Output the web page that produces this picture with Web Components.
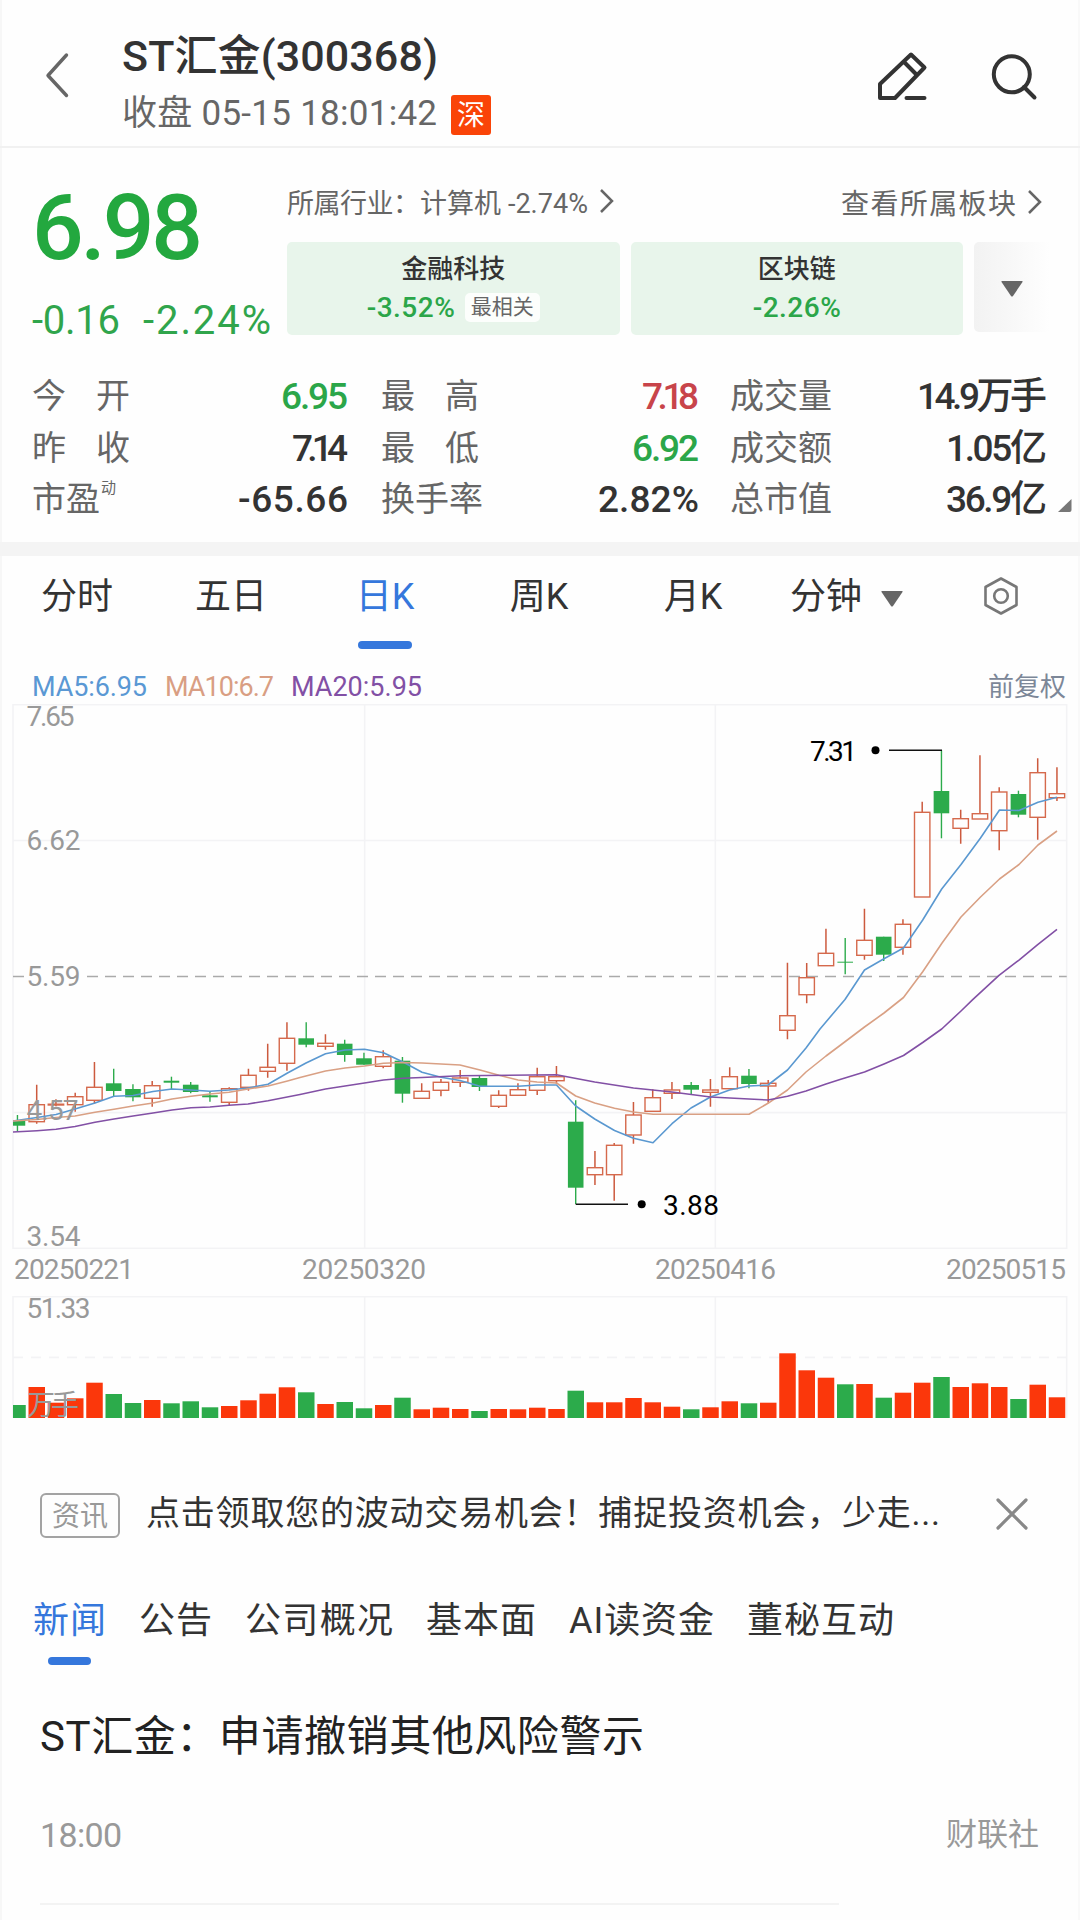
<!DOCTYPE html>
<html lang="zh-CN">
<head>
<meta charset="utf-8">
<title>ST汇金(300368)</title>
<style>
	body {
		margin: 0;
		width: 1080px;
		height: 1920px;
		overflow: hidden;
		box-sizing: border-box;
		background: #fefefe;
		font-family: Roboto, "Noto Sans CJK SC", sans-serif;
		color: #333;
		box-shadow: inset 2px 0 #f7f7f7, inset -2px 0 #f9f9f9;
	}
</style>
</head>
<body>
<stock-app></stock-app>
<script>
const GREEN = '#2cab4b';
const RED = '#fb370b';

class BaseElement extends HTMLElement {
	constructor() {
		super();
		this.attachShadow({ mode: 'open' });
	}

	connectedCallback() { this.render(); }
}

// A run of text tracked to the advance width given in "w"
class FitText extends BaseElement {
	render() {
		this.shadowRoot.innerHTML = `
			<style>
				:host { display: inline-block; white-space: nowrap; flex: none; }
			</style>
			<slot></slot>
		`;
		const target = parseFloat(this.getAttribute('w'));
		const natural = this.getBoundingClientRect().width;
		const spacing = (target - natural) / ([...this.textContent].length - 1);
		this.style.letterSpacing = `${spacing}px`;
		// the last letter's spacing does not count
		this.style.marginRight = `${-spacing}px`;
	}
}

class StockHeader extends BaseElement {
	render() {
		this.shadowRoot.innerHTML = `
			<style>
				:host {
					display: flex;
					height: 146px;
					border-bottom: 2px solid #f1f1f1;
				}
				.back { margin: 52px 0 0 45px; flex: none; }
				.titles { margin: 26px 0 0 51px; }
				.name {
					font-size: 43px;
					font-weight: 500;
					line-height: 60px;
				}
				.sub {
					display: flex;
					align-items: center;
					height: 55px;
					font-size: 35px;
					line-height: 55px;
					color: #666;
				}
				.badge {
					width: 40px;
					height: 40px;
					margin: 2px 0 0 14px;
					border-radius: 3px;
					background: #fa4408;
					color: #fff;
					font-size: 28px;
					line-height: 41px;
					text-align: center;
				}
				.edit { margin: 48px 0 0 auto; }
				.search { margin: 48px 39px 0 62px; }
			</style>
			<svg class="back" width="26" height="48" fill="none" stroke="#666" stroke-width="3.4" stroke-linecap="round" stroke-linejoin="round">
				<path d="M21.5 3 3 23.5 21.5 43.5"/>
			</svg>
			<div class="titles">
				<div class="name"><fit-text w="316">ST汇金(300368)</fit-text></div>
				<div class="sub"><fit-text w="315">收盘 05-15 18:01:42</fit-text><span class="badge">深</span></div>
			</div>
			<svg class="edit" width="54" height="56" fill="none" stroke="#333" stroke-width="4" stroke-linecap="round" stroke-linejoin="round">
				<path d="M36 6.5 49.5 19.5 20 50H5V36L36 6.5ZM28.6 13.5 41.4 26.5M31.5 50h18"/>
			</svg>
			<svg class="search" width="50" height="56" fill="none" stroke="#333" stroke-width="4" stroke-linecap="round">
				<circle cx="20.8" cy="26.3" r="18"/>
				<path d="m33 39 10.5 10.5"/>
			</svg>
		`;
	}
}

class SectorCard extends BaseElement {
	render() {
		const tag = this.getAttribute('tag');
		this.shadowRoot.innerHTML = `
			<style>
				:host {
					display: block;
					flex: none;
					width: 332.5px;
					height: 93px;
					border-radius: 5px;
					background: #e8f5eb;
					text-align: center;
				}
				.name {
					padding-top: 7px;
					font-size: 26px;
					font-weight: 500;
					line-height: 40px;
					color: #333;
				}
				.row {
					display: flex;
					justify-content: center;
					align-items: center;
					gap: 10px;
					height: 37px;
					line-height: 37px;
					font-size: 28px;
					font-weight: 500;
					color: #2ba649;
				}
				.tag {
					padding: 0 6px;
					border-radius: 5px;
					background: #fcfefc;
					font-size: 21px;
					font-weight: 400;
					line-height: 29px;
					color: #666;
				}
			</style>
			<div class="name"><slot></slot></div>
			<div class="row">
				<fit-text w="88">${ this.getAttribute('change') }</fit-text>
				${ tag ? `<span class="tag">${ tag }</span>` : '' }
			</div>
		`;
	}
}

class QuoteSummary extends BaseElement {
	render() {
		this.shadowRoot.innerHTML = `
			<style>
				:host {
					display: flex;
					height: 222px;
					color: #666;
				}
				.quote { width: 255px; padding-left: 32px; flex: none; }
				.price {
					padding-top: 26px;
					font-size: 91px;
					font-weight: 500;
					line-height: 108px;
					color: #23a83f;
				}
				.change {
					display: flex;
					gap: 23px;
					font-size: 40px;
					line-height: 78px;
					color: #30a54c;
				}
				.head {
					display: flex;
					align-items: center;
					height: 56px;
					padding-top: 25px;
					font-size: 27px;
				}
				.head svg { flex: none; }
				.all { margin-left: auto; font-size: 28px; padding-top: 2px; }
				.cards { display: flex; gap: 11px; padding-top: 13px; }
				.more {
					display: flex;
					justify-content: center;
					align-items: center;
					width: 76px;
					height: 90px;
					border-radius: 5px 0 0 5px;
					background: linear-gradient(90deg, #f2f2f2, #fefefe);
				}
				.more svg { margin-top: 4px; }
				.sectors { width: 763px; }
			</style>
			<div class="quote">
				<div class="price"><fit-text w="171">6.98</fit-text></div>
				<div class="change"><fit-text w="88">-0.16</fit-text><fit-text w="128">-2.24%</fit-text></div>
			</div>
			<div class="sectors">
				<div class="head">
					<fit-text w="133">所属行业：</fit-text><fit-text w="168">计算机 -2.74%</fit-text>
					<svg width="16" height="26" style="margin-left:11px" fill="none" stroke="#666" stroke-width="2.5"><path d="m2 2 11 11L2 24"/></svg>
					<fit-text class="all" w="175">查看所属板块</fit-text>
					<svg width="16" height="26" style="margin:2px 7px 0 11px" fill="none" stroke="#666" stroke-width="2.5"><path d="m2 2 11 11L2 24"/></svg>
				</div>
				<div class="cards">
					<sector-card change="-3.52%" tag="最相关">金融科技</sector-card>
					<sector-card change="-2.26%">区块链</sector-card>
					<div class="more"><svg width="24" height="18"><path d="M2 1h20q1 0 .5 1L13 16q-1 1-2 0L1.5 2Q1 1 2 1Z" fill="#666"/></svg></div>
				</div>
			</div>
		`;
	}
}

class StatGrid extends BaseElement {
	render() {
		const spread = text => `<fit-text w="98">${ text }</fit-text>`;
		const rows = [
			[spread('今　开'), '6.95', 67, 'up', spread('最　高'), '7.18', 57, 'red', '成交量', '14.9万手', 130, ''],
			[spread('昨　收'), '7.14', 56, '', spread('最　低'), '6.92', 67, 'up', '成交额', '1.05亿', 101, ''],
			['市盈<sup>动</sup>', '-65.66', 110, '', '换手率', '2.82%', 101, '', '总市值', '36.9亿', 101, '']
		];
		const cell = (label, value, w, tone) => `
			<span class="label">${ label }</span>
			<span class="value ${ tone }"><fit-text w="${ w }">${ value }</fit-text></span>
		`;
		this.shadowRoot.innerHTML = `
			<style>
				:host {
					display: flex;
					height: 172px;
					border-bottom: 14px solid #f4f4f4;
				}
				.grid {
					display: grid;
					grid-template-columns: 150px 166px 33px 150px 168px 31px 150px 167px;
					grid-auto-rows: 51.5px;
					line-height: 51.5px;
					width: 1015px;
					padding: 1px 0 0 32px;
				}
				.label { font-size: 34px; color: #666; white-space: nowrap; }
				.label:nth-child(6n+3) { grid-column: 4; }
				.label:nth-child(6n+5) { grid-column: 7; }
				.value { font-size: 37px; font-weight: 500; text-align: right; white-space: nowrap; }
				.up { color: #2ba649; }
				.red { color: #c8444a; }
				sup { margin-left: 1px; font-size: 15px; line-height: 0; vertical-align: 18px; }
				.corner { margin: 128px 0 0 10px; }
			</style>
			<div class="grid">
				${ rows.map(r => cell(...r.slice(0, 4)) + cell(...r.slice(4, 8)) + cell(...r.slice(8))).join('') }
			</div>
			<svg class="corner" width="15" height="15"><path d="M14.5 1v11q0 2-2 2H1Z" fill="#777"/></svg>
		`;
	}
}

class PeriodTabs extends BaseElement {
	render() {
		const tabs = ['分时', '五日', '日K', '周K', '月K'];
		this.shadowRoot.innerHTML = `
			<style>
				:host {
					display: grid;
					grid-template-columns: repeat(7, 1fr);
					width: 1078px;
					height: 106px;
					font-size: 36px;
				}
				.tab {
					display: flex;
					flex-direction: column;
					align-items: center;
					line-height: 83px;
				}
				.active { color: #3577dc; }
				.active::after {
					content: "";
					width: 54px;
					height: 8px;
					margin-top: 2px;
					border-radius: 4px;
					background: #3577dc;
				}
				.minute { flex-direction: row; height: 83px; justify-content: center; gap: 18px; }
				.minute svg { margin-top: 2px; }
				.settings svg { margin: 0 0 3px; }
			</style>
			${ tabs.map(t => `<div class="tab${ t === '日K' ? ' active' : '' }">${ t }</div>`).join('') }
			<div class="tab minute">分钟<svg width="24" height="18"><path d="M2 1h20q1 0 .5 1L13 16q-1 1-2 0L1.5 2Q1 1 2 1Z" fill="#666"/></svg></div>
			<div class="tab minute settings">
				<svg width="36" height="40" fill="none" stroke="#777" stroke-width="2.6" stroke-linejoin="round">
					<path d="M18 2.5 33.5 11v18L18 37.5 2.5 29V11Z"/>
					<circle cx="18" cy="20" r="6.8"/>
				</svg>
			</div>
		`;
	}
}

// [up, body top, body bottom, high, low, volume], all in chart pixels
const CANDLES = [
	[0, 1120.3, 1125.7, 1115, 1131, 13], [1, 1104.7, 1121.7, 1084.7, 1123.7, 31],
	[1, 1104.2, 1105, 1099.3, 1106.3, 15.3], [1, 1096.7, 1104.7, 1092.7, 1111.7, 19.7],
	[1, 1087.3, 1100.3, 1062, 1103.3, 35.3], [0, 1083.3, 1091, 1068.7, 1096.7, 24],
	[0, 1089, 1097.3, 1084.3, 1101.3, 15], [1, 1085.7, 1098.3, 1081, 1106.7, 18],
	[0, 1080.7, 1082.7, 1076.7, 1089.3, 14.7], [0, 1084.7, 1092, 1082, 1093.3, 16.7],
	[0, 1095.3, 1097.3, 1091.3, 1101.7, 10.7], [1, 1088.7, 1102.3, 1087.3, 1105.7, 12],
	[1, 1075.3, 1087.3, 1068.7, 1090.7, 17.7], [1, 1067.3, 1071.3, 1043.7, 1077.7, 24.3],
	[1, 1038.3, 1063.3, 1022.3, 1070.7, 30.7], [0, 1038.3, 1044.7, 1022.3, 1047.3, 25.7],
	[1, 1043.3, 1046.3, 1034.3, 1049.7, 14], [0, 1043.7, 1055, 1039.7, 1061.7, 16],
	[0, 1058.3, 1064.7, 1052.7, 1064.7, 9.7], [1, 1056.7, 1066.3, 1050.3, 1068.3, 13],
	[0, 1060.7, 1093.7, 1057, 1102.7, 20.3], [1, 1091.3, 1098.3, 1083.3, 1099, 8.7],
	[1, 1082.3, 1090.3, 1079, 1096.3, 10.3], [1, 1078, 1082.3, 1070, 1087, 9],
	[0, 1078, 1087, 1076, 1091, 7], [1, 1095.3, 1106.3, 1090.3, 1108, 9],
	[1, 1089.7, 1095.3, 1083.3, 1095.3, 8.7], [1, 1076.7, 1090.3, 1067.7, 1095, 10.3],
	[1, 1076.7, 1080.7, 1066, 1083.7, 9], [0, 1121.7, 1187.7, 1100.3, 1204, 27.3],
	[1, 1167.7, 1174.7, 1151, 1185, 15.7], [1, 1145.3, 1174.7, 1143, 1200.7, 15.7],
	[1, 1115, 1135, 1102, 1143.7, 20], [1, 1097.7, 1111.3, 1089.3, 1111.3, 15.7],
	[1, 1090, 1093.3, 1082, 1099, 11.3], [0, 1085, 1089.7, 1082, 1094.7, 8.7],
	[1, 1090, 1092.3, 1079, 1106.7, 10.7], [1, 1076.7, 1088.7, 1067.3, 1088.7, 16.7],
	[0, 1075.7, 1084, 1069, 1088.3, 14.7], [1, 1083.3, 1086, 1080, 1102.7, 15.3],
	[1, 1015.7, 1030.3, 962.7, 1039.3, 64.7], [1, 977.7, 994.7, 963, 1003.3, 47.7],
	[1, 953.3, 965.7, 928.7, 965.7, 40.3], [0, 961.7, 962.7, 938, 974.3, 33.7],
	[1, 940.3, 955.3, 908.7, 959.7, 34], [0, 936.7, 954.7, 936.7, 961, 20.3],
	[1, 924.3, 947.3, 919.3, 954.7, 25.3], [1, 812.3, 897, 801.7, 897, 35.3],
	[0, 791, 813.3, 750.3, 838.3, 41], [1, 818.7, 828.3, 809.7, 843.7, 31],
	[1, 813.7, 819, 755.3, 819, 34.7], [1, 792, 830.7, 787.3, 850.3, 31],
	[0, 794, 814.7, 790.7, 817.3, 19], [1, 772.7, 817.3, 758.3, 839.7, 33.3],
	[1, 793.7, 797.7, 767.3, 801, 20.7]
];

const MA5 = '13,1121 37,1117.5 56,1114.5 75,1109 95,1103 114,1096.3 133,1095.5 153,1091.5 172,1089 191,1090 210,1091.3 229,1090 248,1088 268,1084.3 287.5,1073 306,1063 325.5,1053.7 345,1050 364.5,1049.3 383.5,1052.7 403,1062 422,1072.3 441,1077.3 460,1080.5 480,1086.3 518,1086.3 537,1085 556.5,1085 575.7,1106 594.7,1119 614.5,1130.5 633.5,1138.3 653,1142.7 672,1123.7 691,1108 710.5,1097 729.5,1090 749,1086 768,1085 787.5,1070 806,1048 820,1029 845,999.5 864.5,970 884,958.7 903.5,948 922.7,920 941.7,889 961,864.5 980.5,838 999.5,810 1019,810.5 1038,802.3 1057,797.3';
const MA10 = '13,1121 37,1119.5 56,1117.5 75,1116 95,1112.3 114,1109.3 133,1106 153,1103 172,1099 191,1096.3 210,1094 229,1092.3 248,1089 268,1086 287.5,1081 300,1077.5 325.5,1071 345,1068 364.5,1066 383.5,1063.3 403,1062.5 422,1063 441,1064 460,1065 480,1070 499,1075.3 518,1080 537,1082 556.5,1083 575.7,1096 594.7,1103 614.5,1108.3 633.5,1112 653,1114.3 749,1114.3 768,1103.3 787.5,1090 806,1072 826,1056 840,1045.5 864.5,1027 884,1013 903.5,997.5 922.7,971.7 941.7,943.5 961,917 980.5,897 999.5,879 1019,864.5 1038,845 1057,831';
const MA20 = '13,1132 37,1130.7 56,1129.3 75,1126.5 95,1122.3 114,1119 133,1116 153,1113 172,1110 191,1107.7 210,1107 229,1105.3 248,1104 268,1100.7 300,1094.5 325.5,1089 345,1086 364.5,1083 383.5,1080 403,1078.3 422,1077.5 460,1075.8 556.5,1074.7 594.7,1082 633.5,1088 672,1092 710.5,1097 749,1099 768,1100 787.5,1096.3 806,1091 826,1084 840,1079.5 864.5,1072 884,1064 903.5,1055.5 922.7,1042.5 941.7,1029 961,1011 972.7,999.7 999,975.3 1018.7,960.3 1038,944.3 1057,929.3';

class KlineChart extends BaseElement {
	candle([up, top, bottom, high, low], i) {
		const x = 17.45 + 19.25 * i;
		if(!up) {
			const left = Math.max(13, x - 7.8);
			return `
				<path d="M${ x } ${ high }V${ low }" stroke="${ GREEN }" stroke-width="1.4"/>
				<rect x="${ left }" y="${ top }" width="${ x + 7.8 - left }" height="${ bottom - top }" fill="${ GREEN }"/>
			`;
		}
		return `
			<path d="M${ x } ${ high }V${ top }M${ x } ${ bottom }V${ low }" stroke="#cc5a3e" stroke-width="1.5"/>
			<rect x="${ x - 7.7 }" y="${ top }" width="15.4" height="${ bottom - top }" fill="none" stroke="#d5694c" stroke-width="1.4"/>
		`;
	}

	bar(candle, i) {
		const left = Math.max(13, 17.45 + 19.25 * i - 8.2);
		const right = 17.45 + 19.25 * i + 8.3;
		return `<rect x="${ left }" y="${ 1418 - candle[5] }" width="${ right - left }" height="${ candle[5] }" fill="${ candle[0] ? RED : GREEN }"/>`;
	}

	label(text, x, middle, w, color = '#999') {
		return `<text x="${ x }" y="${ middle + 9.5 }" textLength="${ w }" fill="${ color }">${ text }</text>`;
	}

	render() {
		this.shadowRoot.innerHTML = `
			<style>
				:host { display: block; height: 756px; }
				.legend {
					display: flex;
					height: 38px;
					padding: 6px 14px 0 32px;
					font-size: 27px;
					line-height: 38px;
					box-sizing: border-box;
				}
				.ma5 { color: #5a98d4; }
				.ma10 { color: #d99e83; margin-left: 18px; }
				.ma20 { color: #8250a5; margin-left: 17px; }
				.adjust { color: #7c8798; margin-left: auto; font-size: 26px; }
				svg { display: block; }
				text { font-size: 28px; }
			</style>
			<div class="legend">
				<fit-text class="ma5" w="115">MA5:6.95</fit-text>
				<fit-text class="ma10" w="109">MA10:6.7</fit-text>
				<fit-text class="ma20" w="131">MA20:5.95</fit-text>
				<span class="adjust">前复权</span>
			</div>
			<svg width="1080" height="718" viewBox="0 700 1080 718" overflow="visible">
				<g fill="none" stroke="#f3f3f5" stroke-width="1.6">
					<path d="M13 704.7H1066.7V1248.3H13ZM13 840.5H1066.7M13 1112.6H1066.7M364.7 705V1248M715.3 705V1248"/>
					<path d="M13 1418V1296.7H1066.7V1418M364.7 1297V1418M715.3 1297V1418"/>
					<path d="M13 1357.4H1066.7" stroke-dasharray="10 8"/>
				</g>
				<path d="M13 976.6H26M87 976.6H1066.7" stroke="#aaa" stroke-width="1.5" stroke-dasharray="11 7"/>
				${ CANDLES.map(this.candle).join('') }
				${ CANDLES.map(this.bar).join('') }
				<g fill="none" stroke-width="1.6" stroke-linejoin="round">
					<polyline points="${ MA5 }" stroke="#5a98d0"/>
					<polyline points="${ MA10 }" stroke="#d9a084"/>
					<polyline points="${ MA20 }" stroke="#8250a5"/>
				</g>
				${ this.label('7.65', 26.5, 716.5, 48) }
				${ this.label('6.62', 26.5, 840, 54) }
				${ this.label('5.59', 26.5, 976, 54) }
				${ this.label('4.57', 26.5, 1110.5, 52) }
				${ this.label('3.54', 26.5, 1236.5, 54) }
				${ this.label('20250221', 14, 1269.5, 120) }
				${ this.label('20250320', 302, 1269.5, 124) }
				${ this.label('20250416', 655, 1269.5, 121) }
				${ this.label('20250515', 946, 1269.5, 120) }
				${ this.label('51.33', 26.5, 1308.5, 64) }
				${ this.label('万手', 27, 1405, 52) }
				<path d="M889 750.2H942M575.7 1204.2H628" stroke="#111" stroke-width="1.6"/>
				<circle cx="875.5" cy="750.3" r="4"/>
				<circle cx="641.7" cy="1204.3" r="4"/>
				${ this.label('7.31', 810, 751, 47, '#000') }
				${ this.label('3.88', 663, 1205, 56, '#000') }
			</svg>
		`;
	}
}

class NoticeBar extends BaseElement {
	render() {
		this.shadowRoot.innerHTML = `
			<style>
				:host {
					display: flex;
					align-items: center;
					height: 45px;
					padding: 75px 0 0 40px;
				}
				.tag {
					box-sizing: border-box;
					flex: none;
					width: 80px;
					height: 45px;
					border: 2px solid #a3a3a3;
					border-radius: 6px;
					color: #999;
					font-size: 28px;
					line-height: 43px;
					text-align: center;
				}
				.text {
					margin: -5px 0 0 26px;
					font-size: 34px;
					line-height: 45px;
				}
				svg { flex: none; margin: -4px 0 0 55px; }
			</style>
			<span class="tag">资讯</span>
			<fit-text class="text" w="794">${ this.getAttribute('text') }</fit-text>
			<svg width="34" height="34" stroke="#888" stroke-width="3.2" stroke-linecap="round"><path d="M3 3 31 31M31 3 3 31"/></svg>
		`;
	}
}

class NewsTabs extends BaseElement {
	render() {
		const tabs = [['新闻', 73], ['公告', 73], ['公司概况', 148], ['基本面', 110], ['AI读资金', 145], ['董秘互动', 147]];
		this.shadowRoot.innerHTML = `
			<style>
				:host {
					display: flex;
					gap: 33px;
					height: 100px;
					padding: 57px 0 0 33px;
					font-size: 36px;
					line-height: 52px;
				}
				.tab { display: flex; flex-direction: column; align-items: center; }
				.active { color: #3577dc; }
				.active::after {
					content: "";
					width: 43px;
					height: 8px;
					margin-top: 10px;
					border-radius: 4px;
					background: #3577dc;
				}
			</style>
			${ tabs.map(([name, w], i) => `<div class="tab${ i === 0 ? ' active' : '' }"><fit-text w="${ w }">${ name }</fit-text></div>`).join('') }
		`;
	}
}

class NewsItem extends BaseElement {
	render() {
		this.shadowRoot.innerHTML = `
			<style>
				:host { display: block; padding: 12px 41px 0 40px; }
				.title {
					font-size: 42px;
					line-height: 60px;
					color: #222;
				}
				.meta {
					display: flex;
					justify-content: space-between;
					margin-top: 43px;
					line-height: 50px;
					font-size: 31px;
					color: #999;
				}
				.time { font-size: 34px; }
				hr { width: 799px; height: 2px; margin: 43px 0 0; border: 0; background: #f3f3f3; }
			</style>
			<div class="title"><slot></slot></div>
			<div class="meta">
				<fit-text class="time" w="82">${ this.getAttribute('time') }</fit-text>
				<span>${ this.getAttribute('source') }</span>
			</div>
			<hr>
		`;
	}
}

class StockApp extends BaseElement {
	render() {
		this.shadowRoot.innerHTML = `
			<style>
				:host { display: block; }
			</style>
			<stock-header></stock-header>
			<quote-summary></quote-summary>
			<stat-grid></stat-grid>
			<period-tabs></period-tabs>
			<kline-chart></kline-chart>
			<notice-bar text="点击领取您的波动交易机会！捕捉投资机会，少走..."></notice-bar>
			<news-tabs></news-tabs>
			<news-item time="18:00" source="财联社"><fit-text w="604">ST汇金：申请撤销其他风险警示</fit-text></news-item>
		`;
	}
}

customElements.define('fit-text', FitText);
customElements.define('stock-header', StockHeader);
customElements.define('sector-card', SectorCard);
customElements.define('quote-summary', QuoteSummary);
customElements.define('stat-grid', StatGrid);
customElements.define('period-tabs', PeriodTabs);
customElements.define('kline-chart', KlineChart);
customElements.define('notice-bar', NoticeBar);
customElements.define('news-tabs', NewsTabs);
customElements.define('news-item', NewsItem);
customElements.define('stock-app', StockApp);
</script>
</body>
</html>
